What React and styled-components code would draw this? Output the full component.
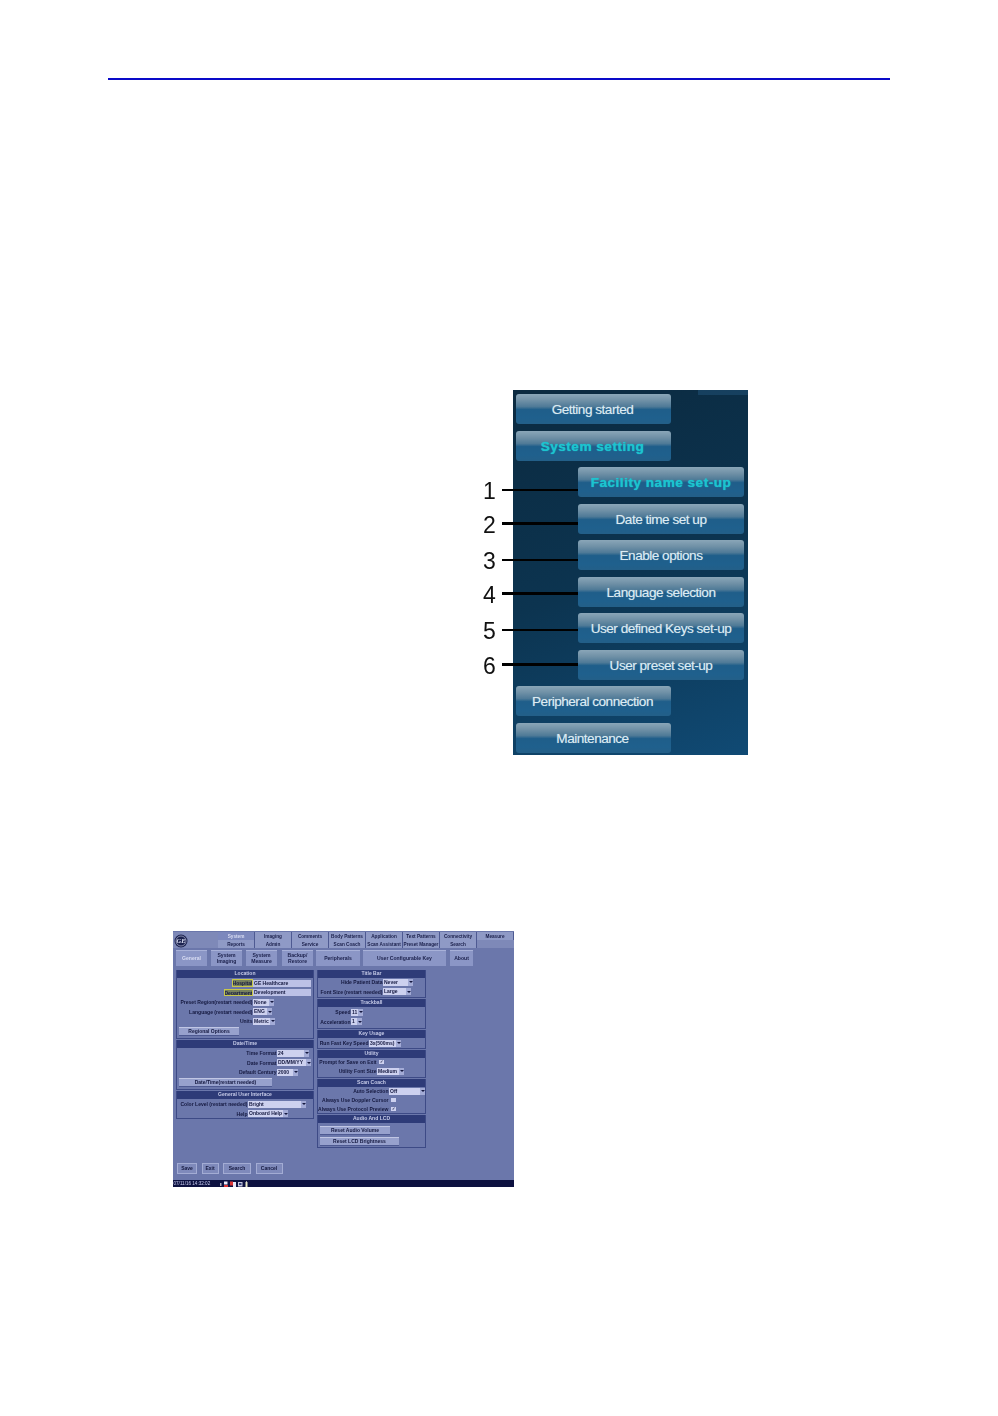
import React from "react";
import styled, { createGlobalStyle } from "styled-components";

const Global = createGlobalStyle`
  html, body { margin: 0; padding: 0; background: #fff; }
  body { font-family: "Liberation Sans", Arial, sans-serif; }
  * { box-sizing: border-box; }
`;

const Page = styled.div`
  width: 998px;
  height: 1416px;
  padding-top: 78px;
  overflow: hidden;
`;

const Rule = styled.hr`
  margin: 0 108.5px 0 108px;
  height: 2px;
  border: 0;
  background: #0a0ac8;
`;

/* ---------- menu figure ---------- */
const MenuPanel = styled.div`
  position: relative;
  width: 235px;
  height: 365px;
  margin: 310px 0 0 513px;
  padding: 4px 0 0 3px;
  display: flex;
  flex-direction: column;
  gap: 6.5px;
  background: linear-gradient(160deg, #0b2a40 0%, #0c3450 50%, #104a74 100%);
  filter: blur(0.25px);
`;

const TopTab = styled.div`
  position: absolute;
  top: 0;
  right: 0;
  width: 50px;
  height: 5px;
  background: #16405f;
`;

const MenuButton = styled.div`
  position: relative;
  flex: none;
  width: ${(p) => (p.$sub ? "166px" : "155px")};
  height: 30px;
  margin-left: ${(p) => (p.$sub ? "62px" : "0")};
  display: flex;
  align-items: center;
  justify-content: center;
  padding: 1px ${(p) => (p.$sub ? "0" : "2px")} 0 0;
  border-radius: 3px;
  background: linear-gradient(180deg, #8aa6b8 0%, #6f90a6 22%, #4f7a97 42%, #1f5e8a 52%, #1f608d 80%, #235f88 100%);
  color: ${(p) => (p.$active ? "#1cc4cf" : "#dcebf2")};
  font-size: 13.6px;
  font-weight: ${(p) => (p.$active ? 700 : 400)};
  letter-spacing: ${(p) => (p.$active ? "0.5px" : "-0.5px")};
  text-shadow: 0 0 1px ${(p) => (p.$active ? "#1cc4cf" : "rgba(220, 235, 242, 0.5)")};
  white-space: nowrap;
`;

const Callout = styled.div`
  position: absolute;
  right: 100%;
  top: ${(p) => p.$y}px;
  transform: translateY(-50%);
  display: flex;
  align-items: center;
  gap: 6px;
  color: #111;
  font-weight: 400;
  letter-spacing: 0;
  text-shadow: none;
`;

const CalloutNumber = styled.span`
  position: relative;
  top: 1px;
  font-size: 23px;
  line-height: 24px;
  width: 13px;
  text-align: center;
`;

const CalloutLine = styled.span`
  display: block;
  width: 76px;
  height: 2.6px;
  background: #000;
`;

/* ---------- settings figure ---------- */
const Screen = styled.div`
  width: 341px;
  height: 256px;
  margin: 176px 0 0 173px;
  display: flex;
  flex-direction: column;
  background: #6b77ab;
  color: #14183f;
  font-size: 5px;
  font-weight: 700;
  line-height: 1;
  filter: blur(0.35px);
  overflow: hidden;
`;

const Header = styled.div`
  flex: none;
  height: 17px;
  padding-top: 1px;
  display: flex;
  background: #6b77ab;
`;

const LogoCell = styled.div`
  width: 45px;
  padding: 1.5px 0 0 1px;
  background: #7e89b8;
`;

const TabGrid = styled.div`
  flex: 1;
  display: grid;
  grid-template-columns: repeat(8, 37px);
  grid-auto-rows: 7.5px;
  row-gap: 0.5px;
  background: #7e89b8;
`;

const TopTabCell = styled.div`
  display: flex;
  align-items: center;
  justify-content: center;
  padding-top: 3px;
  background: ${(p) => (p.$on ? "#7c88bd" : "#8f9ac6")};
  border-right: 0.6px solid #4e5a92;
  color: ${(p) => (p.$on ? "#d8dcf2" : "#1a1f4a")};
  font-size: 4.7px;
  white-space: nowrap;
`;

const SubTabs = styled.div`
  flex: none;
  height: 16px;
  margin-top: 2px;
  padding: 0 0 0 3px;
  display: flex;
  gap: 4px;
`;

const SubTab = styled.div`
  width: ${(p) => p.$w}px;
  margin-right: ${(p) => p.$mr || 0}px;
  display: flex;
  align-items: center;
  justify-content: center;
  text-align: center;
  background: #8b96c6;
  color: ${(p) => (p.$on ? "#d9ddf3" : "#1a1f4a")};
  font-size: 5.1px;
  line-height: 5.6px;
  border-top: 0.5px solid #a8b1d8;
`;

const Columns = styled.div`
  flex: none;
  margin-top: 4px;
  padding-left: 3px;
  display: flex;
  gap: 3px;
  height: 180px;
`;

const Column = styled.div`
  width: ${(p) => p.$w}px;
  display: flex;
  flex-direction: column;
  gap: 1px;
`;

const Section = styled.section`
  flex: none;
  height: ${(p) => p.$h}px;
  border: 0.7px solid #3d4a86;
  border-top: 0;
  display: flex;
  flex-direction: column;
`;

const SectionTitle = styled.div`
  flex: none;
  height: 7.5px;
  display: flex;
  align-items: center;
  justify-content: center;
  background: #2e3b78;
  color: #c6cbe8;
  font-size: 5.05px;
`;

const SectionBody = styled.div`
  flex: 1;
  padding-top: ${(p) => p.$pt ?? 1}px;
  display: flex;
  flex-direction: column;
  gap: ${(p) => p.$gap ?? 0.5}px;
`;

const Row = styled.div`
  flex: none;
  height: 9px;
  display: grid;
  grid-template-columns: ${(p) => p.$label}px auto;
  justify-content: start;
  align-items: center;
  white-space: nowrap;
`;

const Label = styled.span`
  justify-self: end;
  padding: 2px 0.5px 0;
  font-size: 5.05px;
  color: #14183f;
  outline: ${(p) => (p.$mark ? "1px solid #c9c84a" : "0")};
  outline-offset: -1px;
  background: ${(p) => (p.$mark ? "#77815f" : "transparent")};
`;

const Field = styled.span`
  width: ${(p) => p.$w}px;
  height: 7px;
  padding-left: 1px;
  display: flex;
  align-items: center;
  justify-content: space-between;
  background: ${(p) => (p.$input ? "#bcc1e6" : "#cdd1ef")};
  color: #14183f;
  font-size: 5px;
`;

const Arrow = styled.i`
  width: 5px;
  height: 7px;
  display: flex;
  align-items: center;
  justify-content: center;
  background: #a3abd6;
  &::after {
    content: "";
    border-left: 2px solid transparent;
    border-right: 2px solid transparent;
    border-top: 2.5px solid #14183f;
  }
`;

const Check = styled.span`
  width: 4.5px;
  height: 4.5px;
  margin-left: 2px;
  display: flex;
  align-items: center;
  justify-content: center;
  background: #cdd1ef;
  color: #14183f;
  font-size: 4px;
`;

const WideButton = styled.div`
  flex: none;
  width: ${(p) => p.$w}px;
  height: 9px;
  margin: ${(p) => p.$mt || 0}px 0 0 2px;
  display: flex;
  align-items: center;
  justify-content: center;
  background: #97a1cd;
  border-top: 0.5px solid #c0c6e4;
  border-bottom: 0.5px solid #4e5a92;
  color: #14183f;
  font-size: 5px;
`;

const Actions = styled.div`
  flex: none;
  height: 11px;
  margin-top: 13px;
  padding-left: 4px;
  display: flex;
  gap: 4.5px;
`;

const ActionButton = styled.div`
  width: ${(p) => p.$w}px;
  display: flex;
  align-items: center;
  justify-content: center;
  background: #7f8abb;
  border: 0.5px solid #a3acd4;
  color: #14183f;
  font-size: 5px;
`;

const StatusBar = styled.div`
  flex: none;
  height: 7px;
  margin-top: auto;
  padding: 1px 0 0 0.5px;
  display: flex;
  align-items: center;
  gap: 10px;
  background: #0d1140;
  color: #c9cdf0;
  font-size: 4.6px;
  font-weight: 400;
`;

const Logo = () => (
  <svg width="14" height="14" viewBox="0 0 14 14">
    <circle cx="7" cy="7" r="6.5" fill="#1c2350" />
    <circle cx="7" cy="7" r="5" fill="none" stroke="#c9cde8" strokeWidth="0.6" />
    <text x="7" y="9.2" textAnchor="middle" fontFamily="Liberation Serif" fontStyle="italic" fontWeight="700" fontSize="6.5" fill="#dfe2f5">GE</text>
  </svg>
);

const StatusIcons = () => (
  <svg width="28" height="7" viewBox="0 0 28 7">
    <rect x="0" y="2" width="1.5" height="3" fill="#aab" />
    <rect x="4" y="0.5" width="3.5" height="3" fill="#e8e8f8" />
    <rect x="4" y="4" width="4" height="2.5" fill="#d33" />
    <rect x="10" y="0.5" width="3" height="4" fill="#d33" />
    <rect x="13" y="1" width="3" height="5" fill="#e8e8f8" />
    <rect x="18" y="1" width="4.5" height="4.5" fill="#c8c8e0" />
    <rect x="19" y="2" width="2.5" height="2" fill="#33407a" />
    <rect x="25.5" y="1" width="2" height="5.5" fill="#e8e8c8" />
    <rect x="26" y="0.2" width="1" height="1" fill="#ccc" />
  </svg>
);

const Menu = () => {
  const subs = [
    ["Facility name set-up", 1, 23, true],
    ["Date time set up", 2, 20],
    ["Enable options", 3, 20],
    ["Language selection", 4, 17],
    ["User defined Keys set-up", 5, 17],
    ["User preset set-up", 6, 15],
  ];
  return (
    <MenuPanel>
      <TopTab />
      <MenuButton>Getting started</MenuButton>
      <MenuButton $active>System setting</MenuButton>
      {subs.map(([text, n, y, active]) => (
        <MenuButton $sub $active={active} key={n}>
          {text}
          <Callout $y={y}>
            <CalloutNumber>{n}</CalloutNumber>
            <CalloutLine />
          </Callout>
        </MenuButton>
      ))}
      <MenuButton>Peripheral connection</MenuButton>
      <MenuButton>Maintenance</MenuButton>
    </MenuPanel>
  );
};

const Select = ({ w, children }) => (
  <Field $w={w}>
    {children}
    <Arrow />
  </Field>
);

const tabs = [
  "System", "Imaging", "Comments", "Body Patterns", "Application", "Text Patterns", "Connectivity", "Measure",
  "Reports", "Admin", "Service", "Scan Coach", "Scan Assistant", "Preset Manager", "Search",
];

const Settings = () => (
  <Screen>
    <Header>
      <LogoCell><Logo /></LogoCell>
      <TabGrid>
        {tabs.map((t, i) => (
          <TopTabCell $on={i === 0} key={t}>{t}</TopTabCell>
        ))}
      </TabGrid>
    </Header>
    <SubTabs>
      <SubTab $w={31} $on>General</SubTab>
      <SubTab $w={31}>System<br />Imaging</SubTab>
      <SubTab $w={31} $mr={1}>System<br />Measure</SubTab>
      <SubTab $w={31} $mr={-1}>Backup/<br />Restore</SubTab>
      <SubTab $w={44} $mr={-1}>Peripherals</SubTab>
      <SubTab $w={83}>User Configurable Key</SubTab>
      <SubTab $w={23}>About</SubTab>
    </SubTabs>
    <Columns>
      <Column $w={138}>
        <Section $h={69}>
          <SectionTitle>Location</SectionTitle>
          <SectionBody>
            <Row $label={76}><Label $mark>Hospital</Label><Field $input $w={58}>GE Healthcare</Field></Row>
            <Row $label={76}><Label $mark>Department</Label><Field $input $w={58}>Development</Field></Row>
            <Row $label={76}><Label>Preset Region(restart needed)</Label><Select w={21}>None</Select></Row>
            <Row $label={76}><Label>Language (restart needed)</Label><Select w={19}>ENG</Select></Row>
            <Row $label={76}><Label>Units</Label><Select w={22}>Metric</Select></Row>
            <WideButton $w={60} $mt={1}>Regional Options</WideButton>
          </SectionBody>
        </Section>
        <Section $h={50}>
          <SectionTitle>Date/Time</SectionTitle>
          <SectionBody>
            <Row $label={100}><Label>Time Format</Label><Select w={32}>24</Select></Row>
            <Row $label={100}><Label>Date Format</Label><Select w={34}>DD/MM/YY</Select></Row>
            <Row $label={100}><Label>Default Century</Label><Select w={21}>2000</Select></Row>
            <WideButton $w={93} $mt={1}>Date/Time(restart needed)</WideButton>
          </SectionBody>
        </Section>
        <Section $h={28}>
          <SectionTitle>General User Interface</SectionTitle>
          <SectionBody>
            <Row $label={71}><Label>Color Level (restart needed)</Label><Select w={58}>Bright</Select></Row>
            <Row $label={71}><Label>Help</Label><Select w={40}>Onboard Help</Select></Row>
          </SectionBody>
        </Section>
      </Column>
      <Column $w={109}>
        <Section $h={28}>
          <SectionTitle>Title Bar</SectionTitle>
          <SectionBody $pt={0}>
            <Row $label={65}><Label>Hide Patient Data</Label><Select w={30}>Never</Select></Row>
            <Row $label={65}><Label>Font Size (restart needed)</Label><Select w={28}>Large</Select></Row>
          </SectionBody>
        </Section>
        <Section $h={30}>
          <SectionTitle>Trackball</SectionTitle>
          <SectionBody>
            <Row $label={33}><Label>Speed</Label><Select w={12}>11</Select></Row>
            <Row $label={33}><Label>Acceleration</Label><Select w={11}>1</Select></Row>
          </SectionBody>
        </Section>
        <Section $h={19}>
          <SectionTitle>Key Usage</SectionTitle>
          <SectionBody>
            <Row $label={51}><Label>Run Fast Key Speed</Label><Select w={32}>3x(500ms)</Select></Row>
          </SectionBody>
        </Section>
        <Section $h={28}>
          <SectionTitle>Utility</SectionTitle>
          <SectionBody $pt={0} $gap={0}>
            <Row $label={59}><Label>Prompt for Save on Exit</Label><Check>✓</Check></Row>
            <Row $label={59}><Label>Utility Font Size</Label><Select w={27}>Medium</Select></Row>
          </SectionBody>
        </Section>
        <Section $h={35}>
          <SectionTitle>Scan Coach</SectionTitle>
          <SectionBody $pt={0} $gap={0}>
            <Row $label={71}><Label>Auto Selection</Label><Select w={36}>Off</Select></Row>
            <Row $label={71}><Label>Always Use Doppler Cursor</Label><Check /></Row>
            <Row $label={71}><Label>Always Use Protocol Preview</Label><Check>✓</Check></Row>
          </SectionBody>
        </Section>
        <Section $h={33}>
          <SectionTitle>Audio And LCD</SectionTitle>
          <SectionBody $pt={3.5} $gap={2}>
            <WideButton $w={70}>Reset Audio Volume</WideButton>
            <WideButton $w={79}>Reset LCD Brightness</WideButton>
          </SectionBody>
        </Section>
      </Column>
    </Columns>
    <Actions>
      <ActionButton $w={20}>Save</ActionButton>
      <ActionButton $w={17}>Exit</ActionButton>
      <ActionButton $w={28}>Search</ActionButton>
      <ActionButton $w={27}>Cancel</ActionButton>
    </Actions>
    <StatusBar>
      07/11/16 14:32:02
      <StatusIcons />
    </StatusBar>
  </Screen>
);

export default function App() {
  return (
    <Page>
      <Global />
      <Rule />
      <Menu />
      <Settings />
    </Page>
  );
}
